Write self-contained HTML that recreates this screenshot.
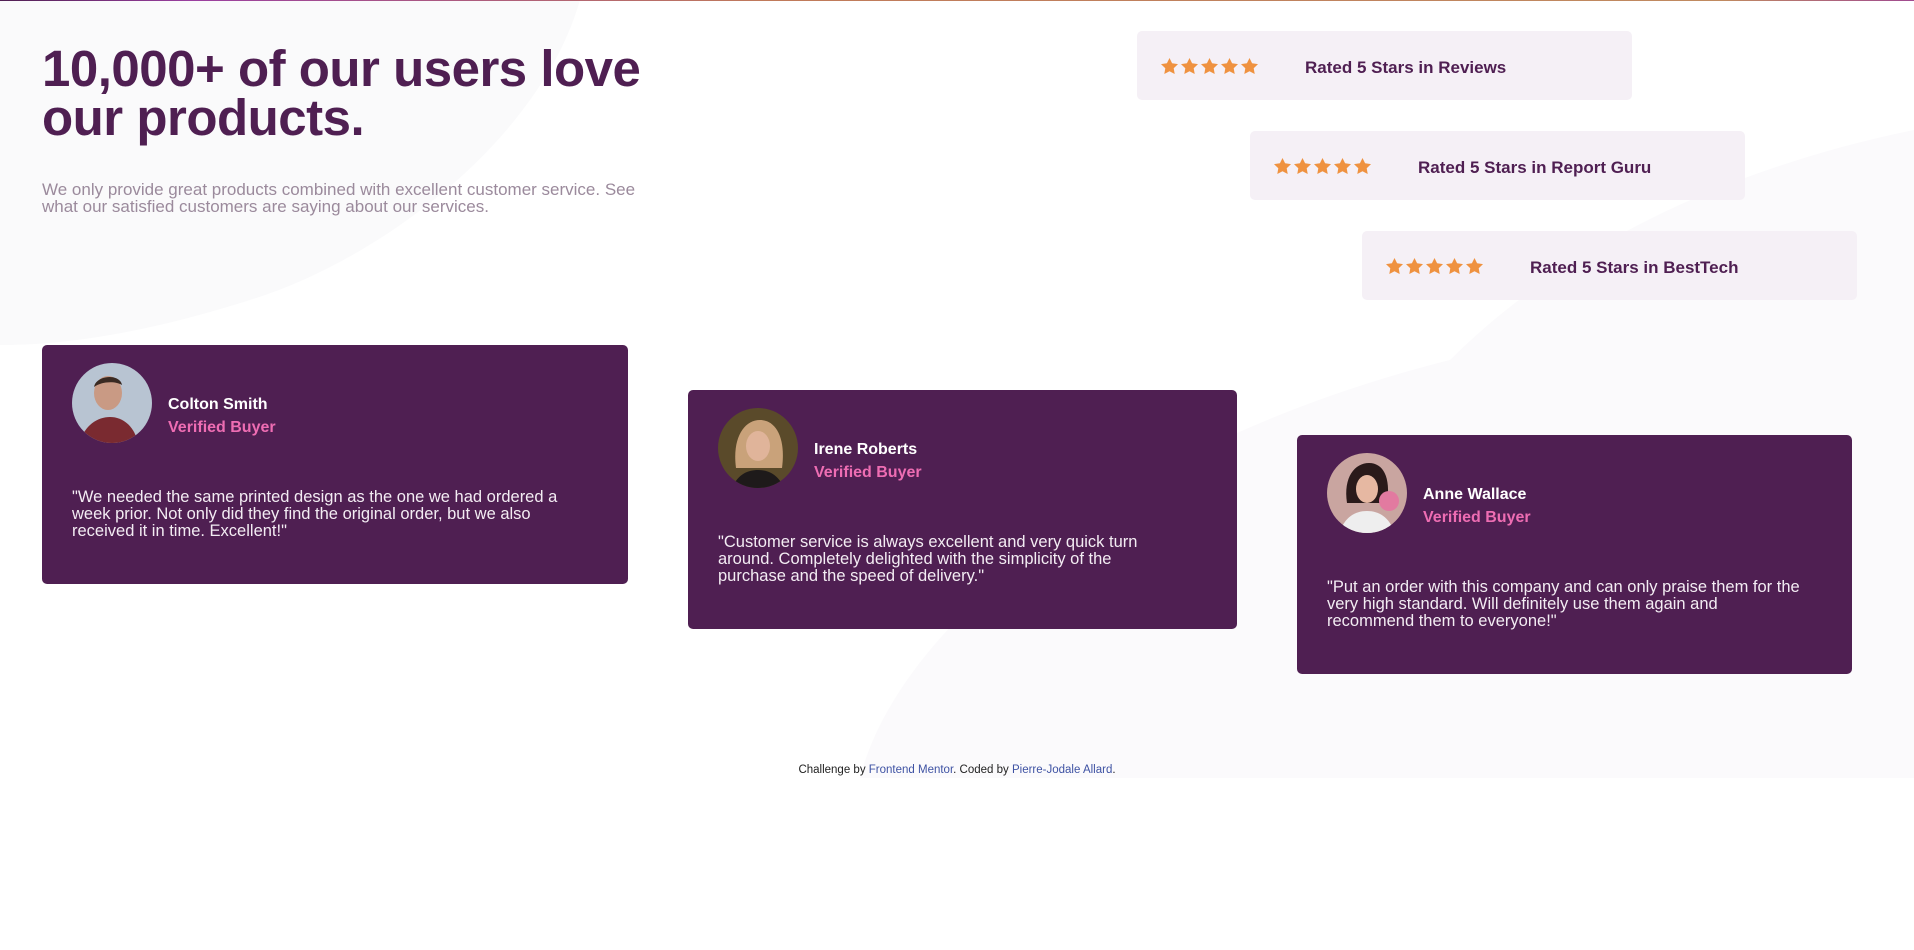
<!DOCTYPE html>
<html><head><meta charset="utf-8"><style>
*{margin:0;padding:0;box-sizing:border-box}
body{width:1914px;height:950px;background:#fff;font-family:"Liberation Sans",sans-serif;position:relative;overflow:hidden}
.topline{position:absolute;left:0;top:0;width:1914px;height:1px;background:linear-gradient(90deg,#4f1f52,#9a3fa0 10%,#c07a5a 40%,#c08a60 90%,#a04a90)}
.bg{position:absolute;left:0;top:0;width:1914px;height:778px}
h1{position:absolute;left:42px;top:44px;width:640px;font-size:51px;line-height:49px;color:#4f1f52;font-weight:bold;letter-spacing:-0.5px}
.lead{position:absolute;left:42px;top:181px;width:625px;font-size:17px;line-height:17px;color:#9b8a9c}
.rate{position:absolute;width:495px;height:69px;background:#f5f0f6;border-radius:5px}
.stars{position:absolute;left:24px;top:27px;display:flex;gap:3px}
.rate .t{position:absolute;left:168px;top:27px;font-size:17px;font-weight:bold;color:#4f1f52}
.card{position:absolute;background:#4f1f52;border-radius:5px;color:#fff}
.av{position:absolute;left:30px;top:18px;width:80px;height:80px;border-radius:50%;overflow:hidden}
.nm{position:absolute;left:126px;top:51px;font-size:16px;font-weight:bold}
.vb{position:absolute;left:126px;top:74px;font-size:16px;font-weight:bold;color:#ee6db3}
.q{position:absolute;left:30px;top:144px;font-size:16.5px;line-height:17px;color:#f3ecf3}
.foot{position:absolute;top:764px;left:0;width:1914px;text-align:center;font-size:11.5px;color:#222}
.foot a{color:#3e52a3}
</style></head><body>
<svg class="bg" viewBox="0 0 1914 778">
<path d="M0 0 L580 0 C540 140 380 260 250 300 C140 335 60 345 0 345 Z" fill="#fafafb"/>
<path d="M1914 130 C1720 170 1560 250 1450 360 C1130 440 900 620 860 778 L1914 778 Z" fill="#fbfafc"/>
</svg>
<div class="topline"></div>
<h1>10,000+ of our users love our products.</h1>
<p class="lead">We only provide great products combined with excellent customer service. See what our satisfied customers are saying about our services.</p>

<div class="rate" style="left:1137px;top:31px"><div class="stars">
<svg width="17" height="16" viewBox="0 0 17 16"><path d="M8.5 0l2.6 5.3 5.9.8-4.3 4.1 1 5.8-5.2-2.7-5.2 2.7 1-5.8L0 6.1l5.9-.8z" fill="#ef9240"/></svg><svg width="17" height="16" viewBox="0 0 17 16"><path d="M8.5 0l2.6 5.3 5.9.8-4.3 4.1 1 5.8-5.2-2.7-5.2 2.7 1-5.8L0 6.1l5.9-.8z" fill="#ef9240"/></svg><svg width="17" height="16" viewBox="0 0 17 16"><path d="M8.5 0l2.6 5.3 5.9.8-4.3 4.1 1 5.8-5.2-2.7-5.2 2.7 1-5.8L0 6.1l5.9-.8z" fill="#ef9240"/></svg><svg width="17" height="16" viewBox="0 0 17 16"><path d="M8.5 0l2.6 5.3 5.9.8-4.3 4.1 1 5.8-5.2-2.7-5.2 2.7 1-5.8L0 6.1l5.9-.8z" fill="#ef9240"/></svg><svg width="17" height="16" viewBox="0 0 17 16"><path d="M8.5 0l2.6 5.3 5.9.8-4.3 4.1 1 5.8-5.2-2.7-5.2 2.7 1-5.8L0 6.1l5.9-.8z" fill="#ef9240"/></svg>
</div><div class="t">Rated 5 Stars in Reviews</div></div>
<div class="rate" style="left:1250px;top:131px"><div class="stars">
<svg width="17" height="16" viewBox="0 0 17 16"><path d="M8.5 0l2.6 5.3 5.9.8-4.3 4.1 1 5.8-5.2-2.7-5.2 2.7 1-5.8L0 6.1l5.9-.8z" fill="#ef9240"/></svg><svg width="17" height="16" viewBox="0 0 17 16"><path d="M8.5 0l2.6 5.3 5.9.8-4.3 4.1 1 5.8-5.2-2.7-5.2 2.7 1-5.8L0 6.1l5.9-.8z" fill="#ef9240"/></svg><svg width="17" height="16" viewBox="0 0 17 16"><path d="M8.5 0l2.6 5.3 5.9.8-4.3 4.1 1 5.8-5.2-2.7-5.2 2.7 1-5.8L0 6.1l5.9-.8z" fill="#ef9240"/></svg><svg width="17" height="16" viewBox="0 0 17 16"><path d="M8.5 0l2.6 5.3 5.9.8-4.3 4.1 1 5.8-5.2-2.7-5.2 2.7 1-5.8L0 6.1l5.9-.8z" fill="#ef9240"/></svg><svg width="17" height="16" viewBox="0 0 17 16"><path d="M8.5 0l2.6 5.3 5.9.8-4.3 4.1 1 5.8-5.2-2.7-5.2 2.7 1-5.8L0 6.1l5.9-.8z" fill="#ef9240"/></svg>
</div><div class="t">Rated 5 Stars in Report Guru</div></div>
<div class="rate" style="left:1362px;top:231px"><div class="stars">
<svg width="17" height="16" viewBox="0 0 17 16"><path d="M8.5 0l2.6 5.3 5.9.8-4.3 4.1 1 5.8-5.2-2.7-5.2 2.7 1-5.8L0 6.1l5.9-.8z" fill="#ef9240"/></svg><svg width="17" height="16" viewBox="0 0 17 16"><path d="M8.5 0l2.6 5.3 5.9.8-4.3 4.1 1 5.8-5.2-2.7-5.2 2.7 1-5.8L0 6.1l5.9-.8z" fill="#ef9240"/></svg><svg width="17" height="16" viewBox="0 0 17 16"><path d="M8.5 0l2.6 5.3 5.9.8-4.3 4.1 1 5.8-5.2-2.7-5.2 2.7 1-5.8L0 6.1l5.9-.8z" fill="#ef9240"/></svg><svg width="17" height="16" viewBox="0 0 17 16"><path d="M8.5 0l2.6 5.3 5.9.8-4.3 4.1 1 5.8-5.2-2.7-5.2 2.7 1-5.8L0 6.1l5.9-.8z" fill="#ef9240"/></svg><svg width="17" height="16" viewBox="0 0 17 16"><path d="M8.5 0l2.6 5.3 5.9.8-4.3 4.1 1 5.8-5.2-2.7-5.2 2.7 1-5.8L0 6.1l5.9-.8z" fill="#ef9240"/></svg>
</div><div class="t">Rated 5 Stars in BestTech</div></div>

<div class="card" style="left:42px;top:345px;width:586px;height:239px">
<div class="av"><svg width="80" height="80"><rect width="80" height="80" fill="#b8c4d2"/><ellipse cx="36" cy="30" rx="14" ry="17" fill="#c99a84"/><path d="M22 24c2-12 26-14 28 -2c-6-4-20-4-28 2z" fill="#3a2a22"/><path d="M8 80c4-18 18-26 30-26s24 8 28 26z" fill="#7a2a30"/></svg></div>
<div class="nm">Colton Smith</div><div class="vb">Verified Buyer</div>
<div class="q" style="width:520px">"We needed the same printed design as the one we had ordered a week prior. Not only did they find the original order, but we also received it in time. Excellent!"</div>
</div>
<div class="card" style="left:688px;top:390px;width:549px;height:239px">
<div class="av"><svg width="80" height="80"><rect width="80" height="80" fill="#5a4a2a"/><path d="M18 60c-4-30 8-48 24-48s26 18 22 48z" fill="#c9a27a"/><ellipse cx="40" cy="38" rx="12" ry="15" fill="#e0b49a"/><path d="M14 80c6-14 16-18 26-18s20 4 26 18z" fill="#1e1a1a"/></svg></div>
<div class="nm">Irene Roberts</div><div class="vb">Verified Buyer</div>
<div class="q" style="width:460px">"Customer service is always excellent and very quick turn around. Completely delighted with the simplicity of the purchase and the speed of delivery."</div>
</div>
<div class="card" style="left:1297px;top:435px;width:555px;height:239px">
<div class="av"><svg width="80" height="80"><rect width="80" height="80" fill="#c9a5a0"/><path d="M20 50c-4-26 8-40 22-40s22 14 18 40z" fill="#2a1a1a"/><ellipse cx="40" cy="36" rx="11" ry="14" fill="#e6b8a2"/><circle cx="62" cy="48" r="10" fill="#e27aa0"/><path d="M12 80c6-16 16-22 28-22s22 6 28 22z" fill="#eee"/></svg></div>
<div class="nm">Anne Wallace</div><div class="vb">Verified Buyer</div>
<div class="q" style="width:480px">"Put an order with this company and can only praise them for the very high standard. Will definitely use them again and recommend them to everyone!"</div>
</div>

<div class="foot">Challenge by <a>Frontend Mentor</a>. Coded by <a>Pierre-Jodale Allard</a>.</div>
</body></html>
